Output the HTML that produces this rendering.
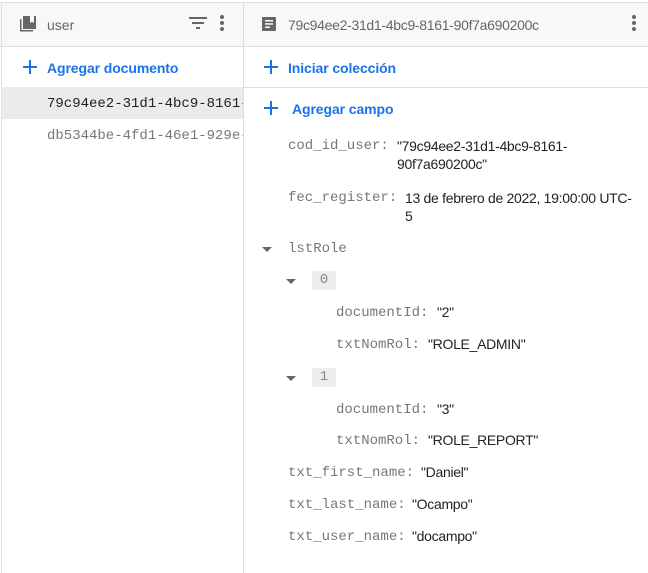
<!DOCTYPE html>
<html><head><meta charset="utf-8"><style>
*{margin:0;padding:0;box-sizing:border-box}
body{width:648px;height:573px;background:#fff;position:relative;overflow:hidden;font-family:"Liberation Sans",sans-serif}
.a{position:absolute;white-space:nowrap}
.m{font-family:"Liberation Mono",monospace;font-size:14px;color:#777;margin-top:2px}
.v{font-size:14px;color:#222;letter-spacing:-0.3px;margin-top:1px}
.blue{color:#1a73e8;font-size:14px;font-weight:bold;letter-spacing:-0.1px}
.tri{position:absolute;width:0;height:0;border-left:5px solid transparent;border-right:5px solid transparent;border-top:5px solid #666;margin-top:2px}
.idx{position:absolute;background:#eee;border-radius:2px;width:24px;height:19px;font-family:"Liberation Mono",monospace;font-size:14px;color:#888;text-align:center;line-height:19px;margin-top:1px}
</style></head><body>
<div class="a" style="left:0;top:2px;width:648px;height:45px;background:#f8f8f8;border-top:1px solid #ddd;border-bottom:1px solid #ddd"></div>
<div class="a" style="left:1px;top:2px;width:1px;height:571px;background:#e0e0e0"></div>
<div class="a" style="left:243px;top:2px;width:1px;height:571px;background:#ddd"></div>
<div class="a" style="left:244px;top:87px;width:404px;height:1px;background:#ddd"></div>
<div class="a" style="left:2px;top:87px;width:241px;height:32px;background:#ebebeb"></div>
<svg class="a" style="left:19px;top:15px" width="18" height="18" viewBox="0 0 18 18"><path d="M1 4v12.5h13v-1.5H2.5V4z" fill="#666"/><rect x="4" y="1" width="13" height="13" fill="#666"/><path d="M11 1h4v7l-2-1.3L11 8z" fill="#f8f8f8"/></svg>
<div class="a" style="left:47px;top:17px;font-size:14px;color:#666">user</div>
<svg class="a" style="left:189px;top:16px" width="18" height="14"><rect x="0" y="1" width="18" height="2" fill="#666"/><rect x="3" y="6" width="12" height="2" fill="#666"/><rect x="7" y="11" width="4" height="2" fill="#666"/></svg>
<svg class="a" style="left:220px;top:15px" width="4" height="16"><circle cx="2" cy="2" r="2" fill="#666"/><circle cx="2" cy="8" r="2" fill="#666"/><circle cx="2" cy="14" r="2" fill="#666"/></svg>
<svg class="a" style="left:262px;top:17px" width="14" height="14"><rect width="14" height="14" rx="1" fill="#666"/><rect x="3" y="3" width="8" height="1.5" fill="#f8f8f8"/><rect x="3" y="6.2" width="8" height="1.5" fill="#f8f8f8"/><rect x="3" y="9.5" width="5" height="1.5" fill="#f8f8f8"/></svg>
<div class="a" style="left:288px;top:17px;font-size:14px;color:#666;letter-spacing:-0.3px">79c94ee2-31d1-4bc9-8161-90f7a690200c</div>
<svg class="a" style="left:632px;top:15px" width="4" height="16"><circle cx="2" cy="2" r="2" fill="#666"/><circle cx="2" cy="8" r="2" fill="#666"/><circle cx="2" cy="14" r="2" fill="#666"/></svg>
<svg class="a" style="left:23px;top:60px" width="14" height="14"><rect x="6" y="0" width="2" height="14" fill="#1a73e8"/><rect x="0" y="6" width="14" height="2" fill="#1a73e8"/></svg>
<div class="a blue" style="left:47px;top:60px">Agregar documento</div>
<svg class="a" style="left:264px;top:60px" width="14" height="14"><rect x="6" y="0" width="2" height="14" fill="#1a73e8"/><rect x="0" y="6" width="14" height="2" fill="#1a73e8"/></svg>
<div class="a blue" style="left:288px;top:60px">Iniciar colección</div>
<svg class="a" style="left:264px;top:101px" width="14" height="14"><rect x="6" y="0" width="2" height="14" fill="#1a73e8"/><rect x="0" y="6" width="14" height="2" fill="#1a73e8"/></svg>
<div class="a blue" style="left:292px;top:101px">Agregar campo</div>
<div class="a m" style="left:47px;top:94px;color:#222;width:196px;overflow:hidden">79c94ee2-31d1-4bc9-8161-90f</div>
<div class="a m" style="left:47px;top:126px;color:#777;width:196px;overflow:hidden">db5344be-4fd1-46e1-929e-abc</div>
<div class="a m" style="left:288px;top:136px">cod_id_user:</div>
<div class="a v" style="left:397px;top:136px;line-height:18px">"79c94ee2-31d1-4bc9-8161-<br>90f7a690200c"</div>
<div class="a m" style="left:288px;top:188px">fec_register:</div>
<div class="a v" style="left:405px;top:188px;line-height:18px">13 de febrero de 2022, 19:00:00 UTC-<br>5</div>
<div class="tri" style="left:262px;top:245px"></div>
<div class="a m" style="left:288px;top:239px">lstRole</div>
<div class="tri" style="left:286px;top:277px"></div>
<div class="idx" style="left:312px;top:270px">0</div>
<div class="a m" style="left:336px;top:303px">documentId:</div>
<div class="a v" style="left:437px;top:303px">"2"</div>
<div class="a m" style="left:336px;top:335px">txtNomRol:</div>
<div class="a v" style="left:428px;top:335px">"ROLE_ADMIN"</div>
<div class="tri" style="left:286px;top:374px"></div>
<div class="idx" style="left:312px;top:367px">1</div>
<div class="a m" style="left:336px;top:400px">documentId:</div>
<div class="a v" style="left:437px;top:400px">"3"</div>
<div class="a m" style="left:336px;top:431px">txtNomRol:</div>
<div class="a v" style="left:428px;top:431px">"ROLE_REPORT"</div>
<div class="a m" style="left:288px;top:463px">txt_first_name:</div>
<div class="a v" style="left:421px;top:463px">"Daniel"</div>
<div class="a m" style="left:288px;top:495px">txt_last_name:</div>
<div class="a v" style="left:412px;top:495px">"Ocampo"</div>
<div class="a m" style="left:288px;top:527px">txt_user_name:</div>
<div class="a v" style="left:412px;top:527px">"docampo"</div>
</body></html>
